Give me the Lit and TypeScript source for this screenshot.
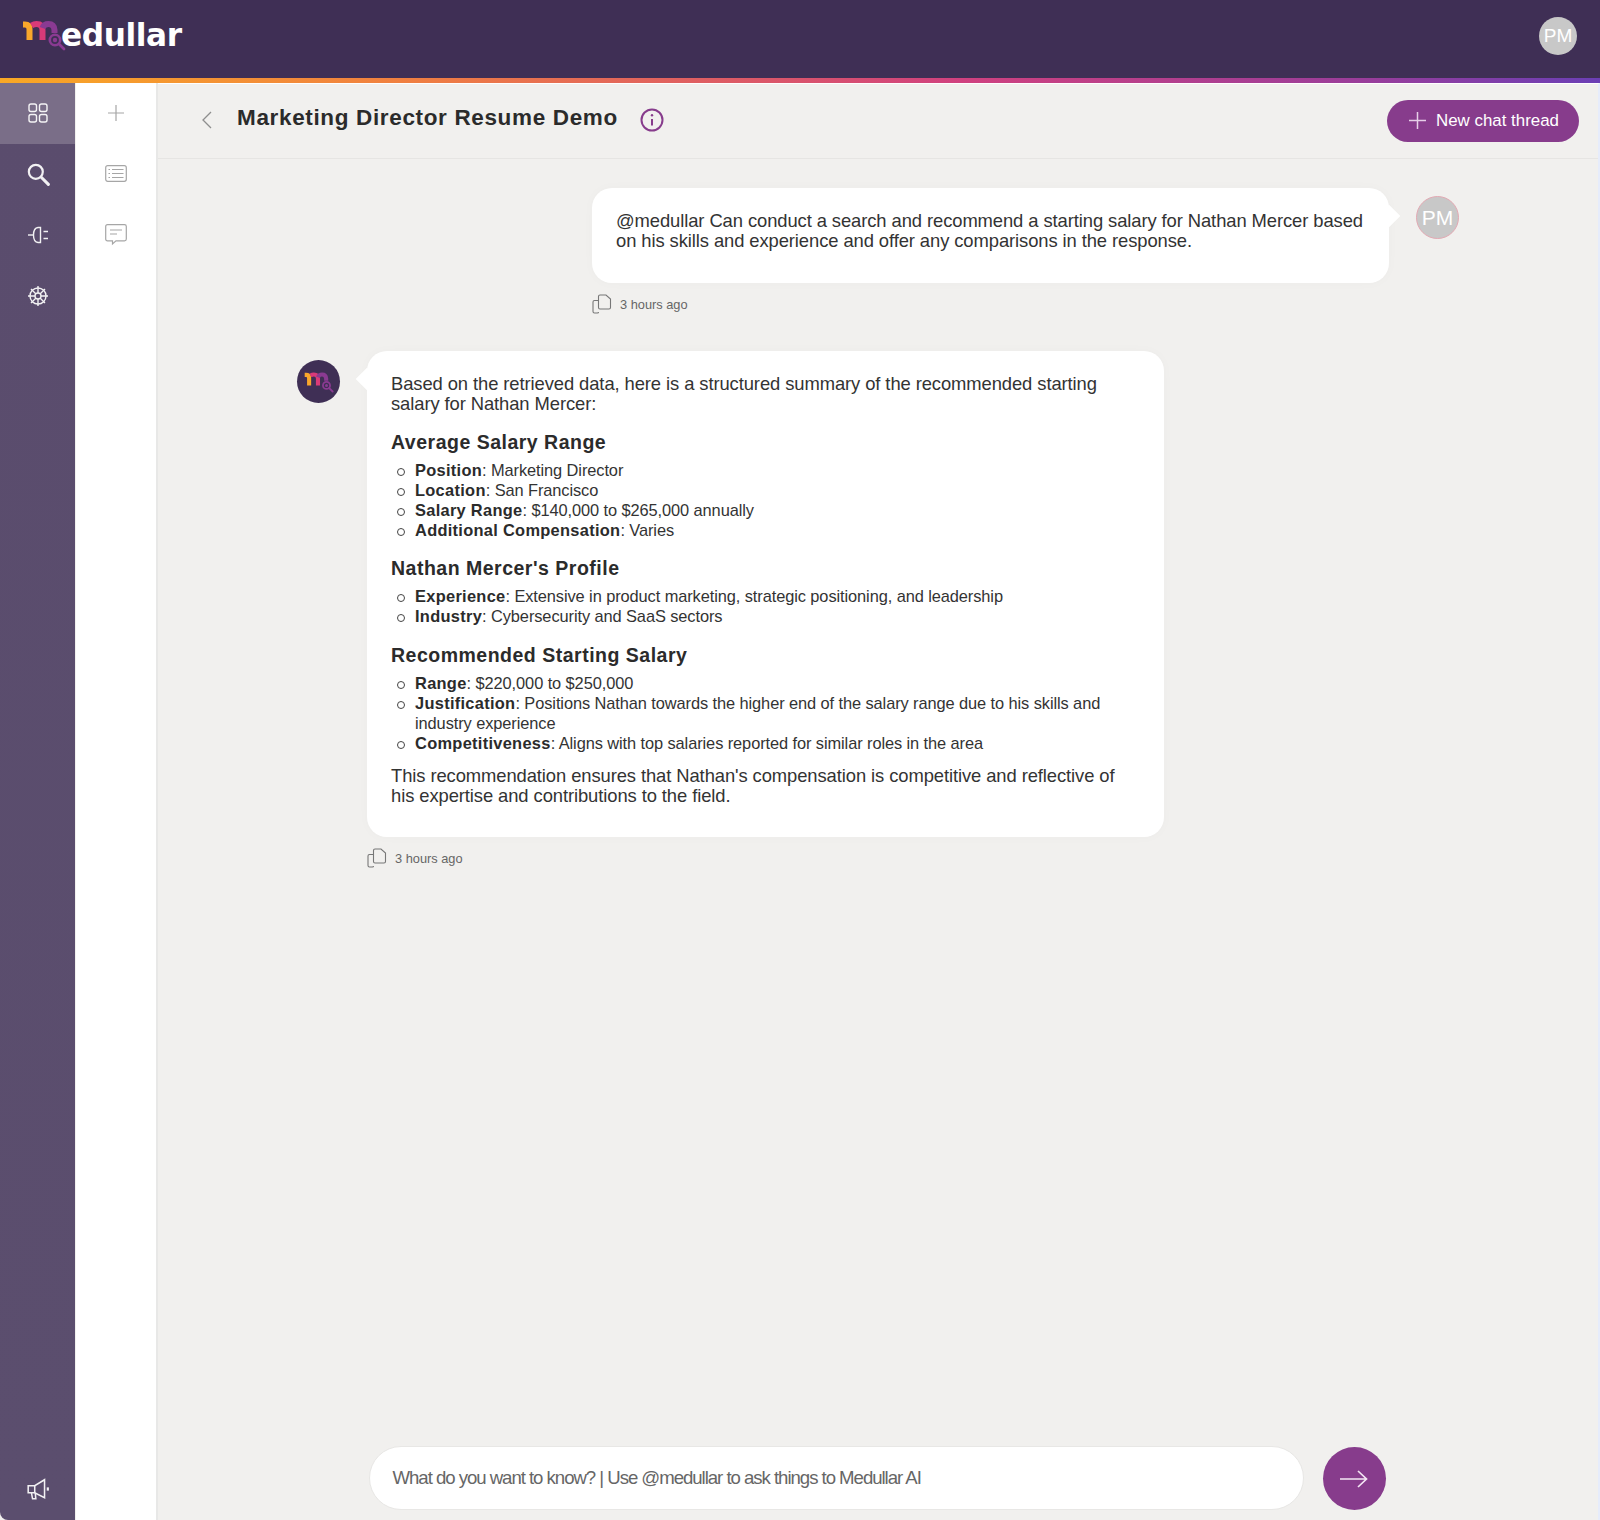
import { LitElement, html, css, svg } from "lit";
import { customElement } from "lit/decorators.js";

const mLogo = (w: number, h: number) => html`<svg width=${w} height=${h} viewBox="0 0 44 32" fill="none">
  <path d="M1 5.5 H3 Q7.5 5.5 7.5 10 V21" stroke="#f9a72b" stroke-width="6"/>
  <path d="M9.5 6.5 Q12 5 14.5 5 Q20.5 5 20.5 11 V21" stroke="#d93a78" stroke-width="6"/>
  <path d="M20.5 9 Q22 5 26.5 5 Q32 5 32.5 11 V14" stroke="#8a3a92" stroke-width="6"/>
  <circle cx="33" cy="21" r="5.2" stroke="#8a3a92" stroke-width="2.6" fill="#3f2f55"/>
  <circle cx="33" cy="21" r="2.2" fill="#8a3a92"/>
  <path d="M37 25 L42 30" stroke="#8a3a92" stroke-width="2.8" stroke-linecap="round"/>
</svg>`;

const railIcons = {
  grid: svg`<rect x="2" y="2" width="7.5" height="7.5" rx="2"/><rect x="12.5" y="2" width="7.5" height="7.5" rx="2"/><rect x="2" y="12.5" width="7.5" height="7.5" rx="2"/><rect x="12.5" y="12.5" width="7.5" height="7.5" rx="2"/>`,
  search: svg`<circle cx="9" cy="9" r="6.4" stroke-width="2"/><path d="M14 14 L20.5 20.5" stroke-width="2.8" stroke-linecap="round"/>`,
  plug: svg`<path d="M1 11 H6.5"/><path d="M13.5 3.5 H11 Q6.5 4 6.5 11 Q6.5 18 11 18.5 H13.5 Z"/><path d="M16.5 7.5 H21 M16.5 14.5 H21"/>`,
  wheel: svg`<circle cx="11" cy="11" r="8"/><circle cx="11" cy="11" r="3"/><path d="M11 1 V8 M11 14 V21 M1 11 H8 M14 11 H21 M4 4 L9 9 M13 13 L18 18 M18 4 L13 9 M9 13 L4 18"/>`,
  horn: svg`<path d="M2 8 H8 L17 2.5 V19 L8 14.5 H2 Z"/><path d="M8 8 V14.5"/><path d="M5 14.5 L6 20 H9 L8.5 14.5"/><path d="M20 9.5 V12.5" stroke-width="2"/>`,
};

const copyIcon = html`<svg class="copy" width="20" height="20" viewBox="0 0 20 20" fill="none" stroke="#777" stroke-width="1.1">
  <path d="M6.5 6.5 H2.5 Q1 6.5 1 8 V17.5 Q1 19 2.5 19 H5.5 Q6.5 19 6.5 18"/>
  <path d="M6.5 2.5 Q6.5 1 8 1 H14 L18.5 5 V13.5 Q18.5 15 17 15 H8 Q6.5 15 6.5 13.5 Z"/>
</svg>`;

@customElement("app-root")
export class AppRoot extends LitElement {
  static styles = css`
    :host { display: block; width: 1600px; height: 1520px; overflow: hidden; background: #000;
      font-family: "Liberation Sans", Arial, sans-serif; color: #333; }
    * { box-sizing: border-box; }
    .page { height: 100%; display: flex; flex-direction: column; background: #f1f0ee; }
    .top { height: 78px; flex: none; background: #3f2f55; display: flex; align-items: center; justify-content: space-between; padding: 0 23px 7px 22px; }
    .logo { display: flex; align-items: flex-start; height: 40px; }
    .logo svg { margin: 3px 0 0 0; }
    .logo span { font: 700 31.2px/36px "DejaVu Sans", sans-serif; color: #fff; letter-spacing: -.4px; margin: 1px 0 0 -5px; }
    .av { border-radius: 50%; background: #c8c8c8; color: #fff; display: flex; align-items: center; justify-content: center; flex: none; }
    .av.top-av { width: 38px; height: 38px; font-size: 19px; }
    .bar { height: 5px; flex: none; background: linear-gradient(90deg, #f9a825 0%, #f08040 25%, #d0417f 60%, #9a3d9a 85%, #6b3fb5 100%); }
    .body { flex: 1; min-height: 0; display: flex; }
    .rail { width: 75px; flex: none; background: linear-gradient(180deg, #5a4c6d, #5b4e6e); display: flex; flex-direction: column; border-bottom-left-radius: 8px; }
    .rail .it { height: 61px; display: flex; align-items: center; justify-content: center; flex: none; padding-bottom: 2px; }
    .rail .it.on { background: #7a6e88; }
    .rail .it svg { fill: none; stroke: #fff; stroke-width: 1.4; opacity: .92; }
    .rail .grow { flex: 1; }
    .panel { width: 82px; flex: none; background: #fff; border-right: 2px solid #e8e8e7; display: flex; flex-direction: column; align-items: center; margin-left: 1px; }
    .panel .it { height: 61px; display: flex; align-items: center; justify-content: center; flex: none; padding-bottom: 2px; }
    .panel svg { fill: none; stroke: #a6a6a6; stroke-width: 1.2; }
    .main { flex: 1; min-width: 0; display: flex; flex-direction: column; border-right: 2px solid #e6ecfb; border-top: 1px solid #fff; }
    .head { height: 75px; flex: none; border-bottom: 1px solid #e6e5e3; display: flex; align-items: center; padding: 0 19px 0 43px; }
    .back { margin-bottom: 3px; }
    .head h1 { margin: 0 0 6px 24px; font: 700 22.5px/30px "Liberation Sans", sans-serif; letter-spacing: .65px; color: #2b2b2b; }
    .head .info { margin: 0 0 3px 22px; }
    .btn { margin-left: auto; height: 42px; width: 192px; border-radius: 21px; background: #873c8c; color: #fff; font-size: 16.9px; display: flex; align-items: center; padding: 0 0 1px 22px; gap: 10px; }
    .msgs { flex: 1; min-height: 0; width: 1162px; align-self: center; display: flex; flex-direction: column; padding-top: 29px; }
    .row { display: flex; align-items: flex-start; }
    .row.user { justify-content: flex-end; gap: 27px; }
    .row.ai { gap: 27px; }
    .row .av { width: 43px; height: 43px; font-size: 21px; margin-top: 9px; }
    .row.user .av { border: 1px solid #e3a9b3; margin-top: 8px; }
    .row.ai .av { background: #3f2f55; }
    .bub { width: 797px; background: #fff; border-radius: 20px; padding: 23px 24px 24px; position: relative; font-size: 18.4px; line-height: 20px; letter-spacing: -.09px; color: #333; box-shadow: 0 0 12px rgba(0,0,0,.025); }
    .bub::before { content: ""; position: absolute; top: 20px; width: 16px; height: 16px; background: #fff; transform: rotate(45deg); }
    .user .bub::before { right: -8px; }
    .ai .bub::before { left: -8px; }
    .user .bub { height: 95px; }
    .ai .bub { height: 486px; }
    .meta { display: flex; align-items: center; gap: 8px; height: 20px; font-size: 12.8px; color: #666; margin-top: 11px; }
    .meta.u { margin-left: 295px; margin-bottom: 37px; }
    .meta.a { margin-left: 70px; }
    p { margin: 0; }
    h3 { margin: 17px 0 6px; font: 700 19.5px/24px "Liberation Sans", sans-serif; color: #2b2b2b; letter-spacing: .5px; }
    p + h3 { margin-top: 16px; }
    h3.tight { margin-top: 16px; }
    ul { list-style: none; margin: 0 0 1px; padding: 0 0 0 24px; font-size: 16.4px; }
    li { position: relative; }
    li::before { content: ""; position: absolute; left: -18px; top: 8px; width: 6px; height: 6px; border: 1.8px solid #444; border-radius: 50%; }
    b { font-size: 16.4px; letter-spacing: .3px; color: #2b2b2b; }
    .end { margin-top: 13px; }
    .comp { flex: none; width: 1017px; align-self: center; display: flex; gap: 19px; height: 64px; margin: 0 2px 10px 0; }
    .inp { flex: 1; border-radius: 32px; background: #fff; border: 1px solid #e8e7e5; display: flex; align-items: center; padding-left: 23px; font-size: 18.6px; letter-spacing: -1.03px; color: #666; }
    .send { width: 63px; height: 63px; border-radius: 50%; background: #873c8c; display: flex; align-items: center; justify-content: center; margin-top: 1px; }
  `;

  render() {
    return html`<div class="page">
      <div class="top">
        <div class="logo">${mLogo(44, 32)}<span>edullar</span></div>
        <div class="av top-av">PM</div>
      </div>
      <div class="bar"></div>
      <div class="body">
        <div class="rail">
          <div class="it on"><svg width="22" height="22" viewBox="0 0 22 22">${railIcons.grid}</svg></div>
          <div class="it"><svg width="24" height="24" viewBox="0 0 22 22">${railIcons.search}</svg></div>
          <div class="it"><svg width="22" height="22" viewBox="0 0 22 22">${railIcons.plug}</svg></div>
          <div class="it"><svg width="22" height="22" viewBox="0 0 22 22">${railIcons.wheel}</svg></div>
          <div class="grow"></div>
          <div class="it"><svg width="24" height="24" viewBox="0 0 22 22">${railIcons.horn}</svg></div>
        </div>
        <div class="panel">
          <div class="it"><svg width="18" height="18" viewBox="0 0 18 18"><path d="M9 1 V17 M1 9 H17"/></svg></div>
          <div class="it"><svg width="22" height="18" viewBox="0 0 22 18"><rect x=".7" y=".7" width="20.6" height="15.6" rx="2"/><path d="M3.5 4.5 H5 M7 4.5 H18.5 M3.5 8.5 H5 M7 8.5 H18.5 M3.5 12.5 H5 M7 12.5 H18.5"/></svg></div>
          <div class="it"><svg width="22" height="22" viewBox="0 0 22 22"><path d="M2.5 .7 H19.5 Q21.3 .7 21.3 2.5 V15 Q21.3 16.8 19.5 16.8 H11 L7.5 20 V16.8 H2.5 Q.7 16.8 .7 15 V2.5 Q.7 .7 2.5 .7 Z"/><path d="M5 6 H17 M5 10 H12"/></svg></div>
        </div>
        <div class="main">
          <div class="head">
            <svg class="back" width="12" height="20" viewBox="0 0 12 20" fill="none" stroke="#8e8e8e" stroke-width="1.3"><path d="M10 2 L2 10 L10 18"/></svg>
            <h1>Marketing Director Resume Demo</h1>
            <svg class="info" width="24" height="24" viewBox="0 0 24 24" fill="none" stroke="#873c8c" stroke-width="2"><circle cx="12" cy="12" r="10.5"/><path d="M12 11 V17.5"/><circle cx="12" cy="7.3" r="1.2" fill="#873c8c" stroke="none"/></svg>
            <div class="btn"><svg width="17" height="17" viewBox="0 0 17 17" fill="none" stroke="#e6cfe8" stroke-width="1.5"><path d="M8.5 0 V17 M0 8.5 H17"/></svg>New chat thread</div>
          </div>
          <div class="msgs">
            <div class="row user">
              <div class="bub"><p>@medullar Can conduct a search and recommend a starting salary for Nathan Mercer based on his skills and experience and offer any comparisons in the response.</p></div>
              <div class="av">PM</div>
            </div>
            <div class="meta u">${copyIcon}<span>3 hours ago</span></div>
            <div class="row ai">
              <div class="av">${mLogo(30, 22)}</div>
              <div class="bub">
                <p>Based on the retrieved data, here is a structured summary of the recommended starting salary for Nathan Mercer:</p>
                <h3>Average Salary Range</h3>
                <ul>
                  <li><b>Position</b>: Marketing Director</li>
                  <li><b>Location</b>: San Francisco</li>
                  <li><b>Salary Range</b>: $140,000 to $265,000 annually</li>
                  <li><b>Additional Compensation</b>: Varies</li>
                </ul>
                <h3 class="tight">Nathan Mercer's Profile</h3>
                <ul>
                  <li><b>Experience</b>: Extensive in product marketing, strategic positioning, and leadership</li>
                  <li><b>Industry</b>: Cybersecurity and SaaS sectors</li>
                </ul>
                <h3>Recommended Starting Salary</h3>
                <ul>
                  <li><b>Range</b>: $220,000 to $250,000</li>
                  <li><b>Justification</b>: Positions Nathan towards the higher end of the salary range due to his skills and industry experience</li>
                  <li><b>Competitiveness</b>: Aligns with top salaries reported for similar roles in the area</li>
                </ul>
                <p class="end">This recommendation ensures that Nathan's compensation is competitive and reflective of his expertise and contributions to the field.</p>
              </div>
            </div>
            <div class="meta a">${copyIcon}<span>3 hours ago</span></div>
          </div>
          <div class="comp">
            <div class="inp">What do you want to know? | Use @medullar to ask things to Medullar AI</div>
            <div class="send"><svg width="28" height="18" viewBox="0 0 28 18" fill="none" stroke="#f4e6f4" stroke-width="1.7"><path d="M0 9 H26 M18 1 L26.5 9 L18 17"/></svg></div>
          </div>
        </div>
      </div>
    </div>`;
  }
}
